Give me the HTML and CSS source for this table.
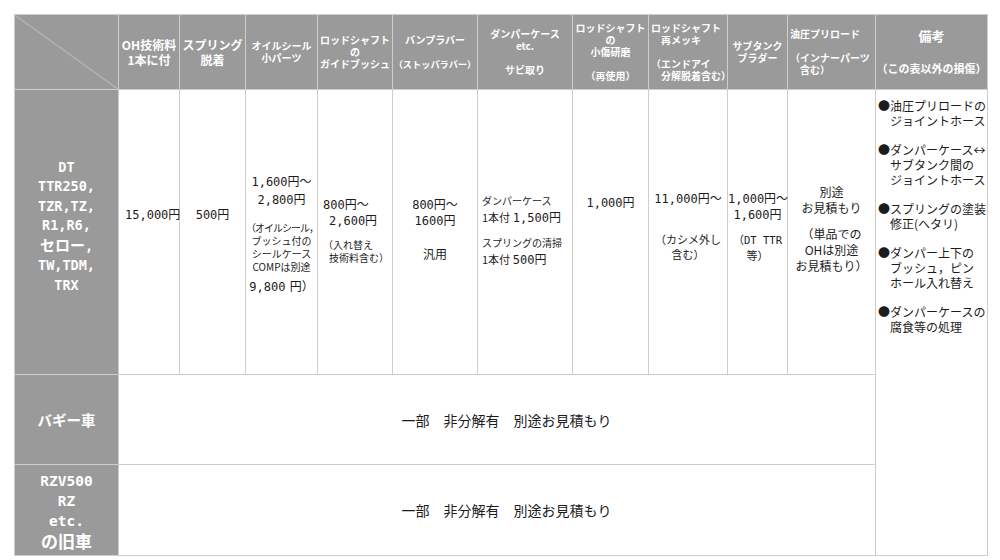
FILE: index.html
```html
<!DOCTYPE html>
<html lang="ja">
<head>
<meta charset="utf-8">
<title>OH料金表</title>
<link rel="stylesheet" href="styles.css">
</head>
<body>
<table class="price">
<colgroup>
<col class="w0"><col class="w1"><col class="w2"><col class="w3"><col class="w4"><col class="w5"><col class="w6"><col class="w7"><col class="w8"><col class="w9"><col class="w10"><col class="w11">
</colgroup>
<tr class="r-head">
<th class="diag"></th>
<th class="h12">OH技術料<br>1本に付</th>
<th class="h12">スプリング<br>脱着</th>
<th class="h10">オイルシール<br>小パーツ</th>
<th class="h10">ロッドシャフト<br>の<br>ガイドブッシュ</th>
<th class="h10">バンプラバー<br><br><span class="h9">（ストッパラバー）</span></th>
<th class="h10">ダンパーケース<br>etc.<br><br>サビ取り</th>
<th class="h10">ロッドシャフト<br>の<br>小傷研磨<br><br>（再使用）</th>
<th class="h10 hl">ロッドシャフト<br>　再メッキ<br><br>（エンドアイ<br>　分解脱着含む）</th>
<th class="h10">サブタンク<br>ブラダー</th>
<th class="h10 hl">油圧プリロード<br><br>（インナーパーツ<br>　含む）</th>
<th class="hnote"><span class="hbig">備考</span><br><br>（この表以外の損傷）</th>
</tr>
<tr class="r-body">
<th class="lab lab-main">DT<br>TTR250,<br>TZR,TZ,<br>R1,R6,<br><span class="jp">セロー</span>,<br>TW,TDM,<br>TRX</th>
<td class="cell c1"><div class="b">15,000円</div></td>
<td class="cell c2"><div class="b">500円</div></td>
<td class="cell c3">
<div class="b l18">1,600円～</div>
<div class="b l18">2,800円</div>
<div class="s tight g3">（オイルシール，</div>
<div class="s">ブッシュ付の</div>
<div class="s">シールケース</div>
<div class="s l14">COMPは別途</div>
<div class="b l18 g4">9,800<span class="nsp"> </span>円）</div>
</td>
<td class="cell c4">
<div class="b">800円～</div>
<div class="b ind">2,600円</div>
<div class="s g9">（入れ替え</div>
<div class="s ind">技術料含む）</div>
</td>
<td class="cell c5">
<div class="b">800円～</div>
<div class="b">1600円</div>
<div class="j g17">汎用</div>
</td>
<td class="cell c6">
<div class="s l16">ダンパーケース</div>
<div class="mix"><span class="s">1本付</span> <span class="b">1,500円</span></div>
<div class="s l16 g9">スプリングの清掃</div>
<div class="mix"><span class="s">1本付</span> <span class="b">500円</span></div>
</td>
<td class="cell c7"><div class="b">1,000円</div></td>
<td class="cell c8">
<div class="b">11,000円～</div>
<div class="t g25">（カシメ外し</div>
<div class="t">含む）</div>
</td>
<td class="cell c9">
<div class="b">1,000円～</div>
<div class="b">1,600円</div>
<div class="t g9">（<span class="mono">DT TTR</span></div>
<div class="t">等）</div>
</td>
<td class="cell c10">
<div class="j">別途</div>
<div class="j">お見積もり</div>
<div class="j g10">（単品での</div>
<div class="j">OHは別途</div>
<div class="j">お見積もり）</div>
</td>
<td class="note" rowspan="3">
<p>●油圧プリロードの<br>　ジョイントホース</p>
<p>●ダンパーケース↔<br>　サブタンク間の<br>　ジョイントホース</p>
<p>●スプリングの塗装<br>　修正(ヘタリ)</p>
<p>●ダンパー上下の<br>　ブッシュ，ピン<br>　ホール入れ替え</p>
<p>●ダンパーケースの<br>　腐食等の処理</p>
</td>
</tr>
<tr class="r-buggy">
<th class="lab lab-jp">バギー車</th>
<td class="wide" colspan="10">一部　非分解有　別途お見積もり</td>
</tr>
<tr class="r-old">
<th class="lab lab-old">RZV500<br>RZ<br>etc.<br><span class="jp2">の旧車</span></th>
<td class="wide" colspan="10">一部　非分解有　別途お見積もり</td>
</tr>
</table>
</body>
</html>
```

FILE: styles.css
```css
html, body {
  margin: 0;
  background: #ffffff;
}
body {
  padding: 14px 0 0 14px;
  font-family: "Noto Sans CJK JP", "Noto Sans", sans-serif;
  color: #1c1c1c;
}
.price {
  border-collapse: collapse;
  table-layout: fixed;
  width: 974px;
}
.price th, .price td {
  border: 1px solid #cdcdcd;
  padding: 0;
  white-space: nowrap;
  overflow: visible;
}
.w0 { width: 104px; }
.w1 { width: 61px; }
.w2 { width: 66px; }
.w3 { width: 72px; }
.w4 { width: 75px; }
.w5 { width: 85px; }
.w6 { width: 95px; }
.w7 { width: 76px; }
.w8 { width: 79px; }
.w9 { width: 60px; }
.w10 { width: 88px; }
.w11 { width: 112px; }

.r-head { height: 75px; }
.r-body { height: 285px; }
.r-buggy { height: 90px; }
.r-old { height: 91px; }

/* header */
.r-head th {
  background: #9a9a9a;
  color: #ffffff;
  font-weight: bold;
  text-align: center;
  vertical-align: middle;
}
.diag {
  background: linear-gradient(to top right, transparent calc(50% - 0.6px), #d6d6d6 50%, transparent calc(50% + 0.6px)), #9a9a9a !important;
}
.h12 { font-size: 12px; line-height: 15px; }
.h10 { font-size: 10px; line-height: 12px; }
.h9 { font-size: 9.2px; }
.hl { text-align: left !important; padding-left: 2px !important; }
.hnote { font-size: 11px; line-height: 16px; }
.hbig { font-size: 13px; }

/* row labels */
.lab {
  background: #9a9a9a;
  color: #ffffff;
  font-weight: bold;
  text-align: center;
}
.lab-main {
  vertical-align: top;
  padding-top: 68px !important;
  font-family: "DejaVu Sans Mono", "Noto Sans CJK JP", monospace;
  font-size: 13.5px;
  line-height: 19.3px;
}
.lab-main .jp, .lab-old .jp2 {
  font-family: "Noto Sans CJK JP", sans-serif;
}
.lab-main .jp { font-size: 15px; }
.lab-jp {
  vertical-align: middle;
  font-size: 14.5px;
}
.lab-old {
  vertical-align: middle;
  padding-top: 4px !important;
  font-family: "DejaVu Sans Mono", "Noto Sans CJK JP", monospace;
  font-size: 14.5px;
  line-height: 20px;
}
.lab-old .jp2 { font-size: 17px; }

/* body cells */
.cell {
  vertical-align: top;
  text-align: center;
  color: #1c1c1c;
}
.b {
  font-family: "DejaVu Sans Mono", "Noto Sans CJK JP", monospace;
  font-size: 12px;
  line-height: 16px;
}
.mono {
  font-family: "DejaVu Sans Mono", monospace;
  font-size: 10.5px;
}
.nsp { font-size: 7px; }
.s {
  font-size: 10px;
  line-height: 13px;
}
.t {
  font-size: 11px;
  line-height: 15px;
}
.j {
  font-size: 12px;
  line-height: 16px;
}
.mix {
  font-size: 12px;
  line-height: 16px;
}
.mix .s { font-size: 11px; line-height: 16px; }
.mix .b { line-height: 16px; }
.l14 { line-height: 14px; }
.l16 { line-height: 16px; }
.l18 { line-height: 18px; }
.tight { letter-spacing: -1px; }
.ind { padding-left: 6px; }
.g3 { margin-top: 12px; }
.g4 { margin-top: 4px; }
.g9 { margin-top: 9px; }
.g10 { margin-top: 10px; }
.g17 { margin-top: 17px; }
.g25 { margin-top: 25px; }

.c1 { padding: 117px 0 0 6px !important; text-align: left; }
.c2 { padding-top: 117px !important; }
.c3 { padding-top: 83px !important; }
.c4 { padding: 107px 0 0 5px !important; text-align: left; }
.c5 { padding-top: 107px !important; }
.c6 { padding: 103px 0 0 4px !important; text-align: left; }
.c7 { padding-top: 105px !important; }
.c8 { padding-top: 101px !important; }
.c9 { padding-top: 101px !important; }
.c10 { padding-top: 94px !important; }
.c10 .j:nth-child(n+4) { line-height: 15.5px; }

/* remarks */
.note {
  vertical-align: top;
  padding: 8px 0 0 2px !important;
  font-size: 12px;
  line-height: 15px;
  color: #1c1c1c;
}
.note p {
  margin: 0 0 14px 0;
}

/* merged rows */
.wide {
  text-align: center;
  vertical-align: middle;
  font-size: 14px;
  padding-left: 19px !important;
  color: #1c1c1c;
}
```
